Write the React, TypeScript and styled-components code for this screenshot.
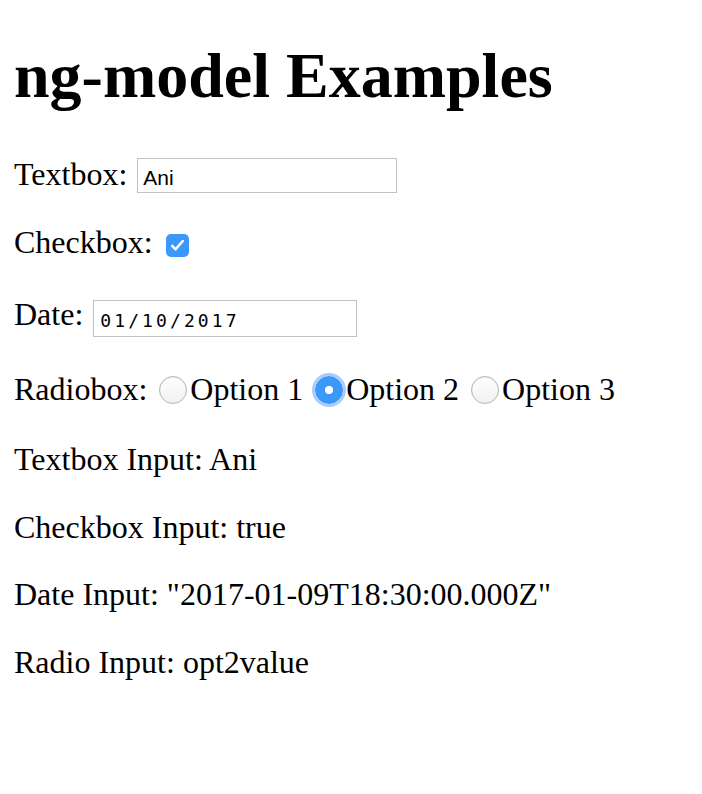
import React from "react";
import styled, { createGlobalStyle, css } from "styled-components";

const GlobalStyle = createGlobalStyle`
  html, body {
    margin: 0;
    padding: 0;
    background: #ffffff;
  }
  body {
    font-family: "Liberation Serif", "Times New Roman", serif;
    color: #000000;
  }
`;

const Page = styled.div`
  display: flow-root;
  padding: 0 14px 40px;
`;

const Title = styled.h1`
  font-size: 64px;
  font-weight: 700;
  line-height: normal;
  margin: 39px 0 0;
`;

const Row = styled.p<{ $gap?: number }>`
  font-size: 32px;
  line-height: normal;
  margin: ${(p) => p.$gap ?? 30.5}px 0 0;
  white-space: nowrap;
`;

const TextInput = styled.input`
  box-sizing: border-box;
  width: 260px;
  height: 35px;
  margin: 0 0 0 2px;
  padding: 7px 5px 2px;
  border: 1px solid #c2c2c2;
  border-radius: 0;
  background: #fff;
  font-family: "Liberation Sans", Arial, sans-serif;
  font-size: 21px;
  line-height: normal;
  color: #000;
  vertical-align: baseline;
  outline: none;
`;

const DateInput = styled.input`
  box-sizing: border-box;
  width: 264px;
  height: 37px;
  margin: 0 0 0 2px;
  padding: 9px 6px 5px;
  border: 1px solid #c2c2c2;
  border-radius: 0;
  background: #fff;
  font-family: "DejaVu Sans Mono", "Liberation Mono", monospace;
  font-size: 18px;
  letter-spacing: 3.1px;
  line-height: normal;
  color: #000;
  vertical-align: -2px;
  outline: none;
`;

const CheckBox = styled.span`
  display: inline-block;
  overflow: hidden;
  box-sizing: border-box;
  width: 23px;
  height: 23px;
  margin-left: 5px;
  border-radius: 5px;
  background: #3b99fc;
  vertical-align: -4px;

  svg {
    display: block;
  }
`;

const Radio = styled.span<{ $checked?: boolean }>`
  display: inline-block;
  box-sizing: border-box;
  width: 28px;
  height: 28px;
  border-radius: 50%;
  margin: 0 3px 0 4px;
  vertical-align: -4px;
  ${(p) =>
    p.$checked
      ? css`
          background: radial-gradient(circle, #ffffff 0 3.7px, #3b99fc 4.5px);
          border: 1px solid #3a8ff0;
          box-shadow: 0 0 0 3px rgba(110, 172, 250, 0.6);
        `
      : css`
          background: linear-gradient(#ffffff, #f1f1f1);
          border: 1px solid #b3b3b3;
          box-shadow: inset 0 1px 1px rgba(0, 0, 0, 0.06);
        `}
`;

export default function App() {
  return (
    <>
      <GlobalStyle />
      <Page>
        <Title>ng-model Examples</Title>
        <Row $gap={43}>
          Textbox: <TextInput type="text" value="Ani" readOnly />
        </Row>
        <Row $gap={31}>
          Checkbox:{" "}
          <CheckBox role="checkbox" aria-checked="true">
            <svg width="23" height="23" viewBox="0 0 23 23" fill="none">
              <path
                d="M6.2 11.8 L9.6 15.3 L16.8 7"
                stroke="#ffffff"
                strokeWidth="2.5"
                strokeLinecap="round"
                strokeLinejoin="round"
              />
            </svg>
          </CheckBox>
        </Row>
        <Row $gap={34.5}>
          Date: <DateInput type="text" value="01/10/2017" readOnly />
        </Row>
        <Row $gap={34.5}>
          Radiobox: <Radio role="radio" aria-checked="false" />Option 1{" "}
          <Radio role="radio" aria-checked="true" $checked />Option 2{" "}
          <Radio role="radio" aria-checked="false" />Option 3
        </Row>
        <Row $gap={33}>Textbox Input: Ani</Row>
        <Row>Checkbox Input: true</Row>
        <Row>Date Input: "2017-01-09T18:30:00.000Z"</Row>
        <Row>Radio Input: opt2value</Row>
      </Page>
    </>
  );
}
